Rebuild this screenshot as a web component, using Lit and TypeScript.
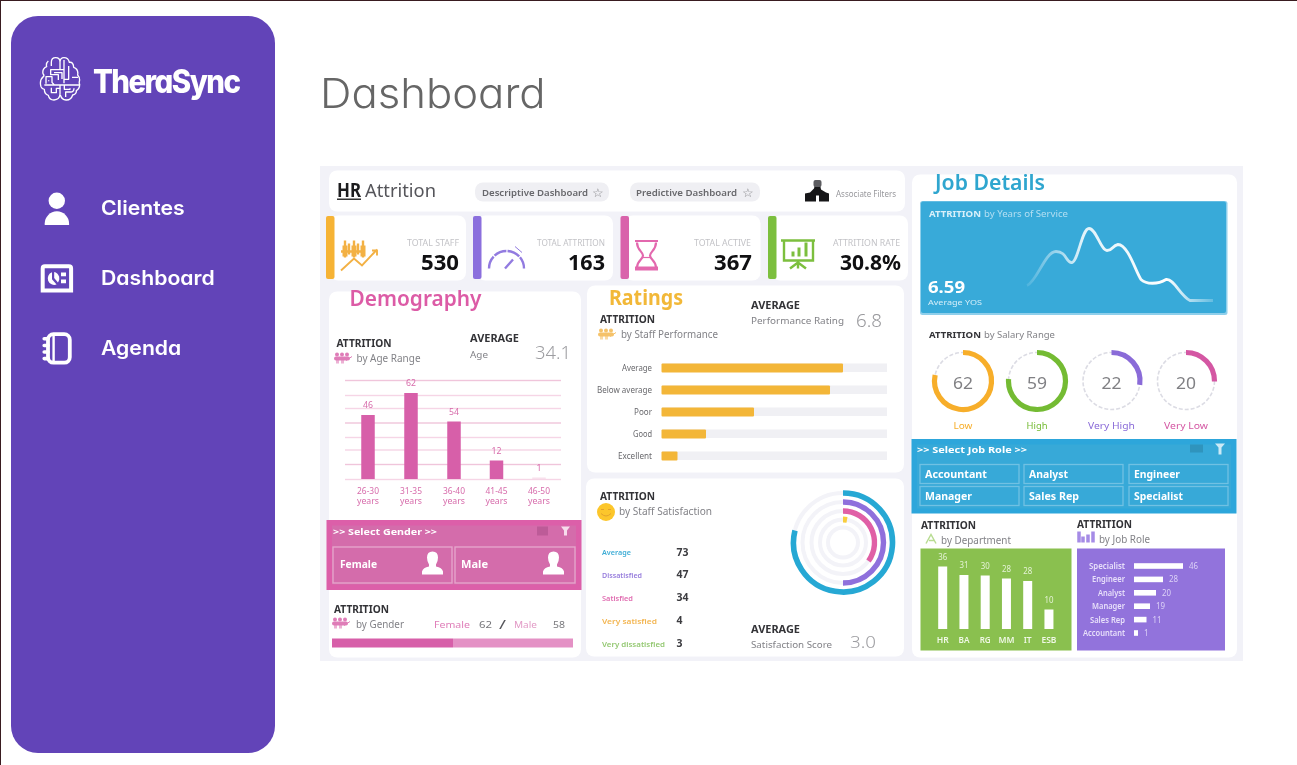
import { LitElement, html, svg, css } from "lit";
import { customElement } from "lit/decorators.js";

const PINK = "#d75fa9";
const GOLD = "#f3b638";
const PURPLE = "#9273dc";
const GREEN = "#7cbf3e";
const DARK = "#333337";
const GREY = "#828287";

interface TextOptions {
  weight?: number;
  anchor?: "start" | "middle" | "end";
}

/** Text fitted to a given width, on the given baseline. */
const label = (
  x: number,
  y: number,
  width: number,
  size: number,
  fill: string,
  text: string,
  { weight = 400, anchor = "start" }: TextOptions = {},
) => svg`<text x=${x} y=${y} font-size=${size} fill=${fill} font-weight=${weight}
  text-anchor=${anchor} textLength=${width} lengthAdjust="spacingAndGlyphs">${text}</text>`;

/** Clockwise arc that starts at twelve o'clock. */
const arc = (cx: number, cy: number, r: number, degrees: number, color: string, width: number) => {
  const a = (degrees * Math.PI) / 180;
  const x = cx + r * Math.sin(a);
  const y = cy - r * Math.cos(a);
  return svg`<path d="M${cx} ${cy - r}A${r} ${r} 0 ${degrees > 180 ? 1 : 0} 1 ${x} ${y}"
    fill="none" stroke=${color} stroke-width=${width}></path>`;
};

const panel = (x: number, y: number, w: number, h: number) =>
  svg`<rect x=${x} y=${y} width=${w} height=${h} rx="8" fill="#fff"></rect>`;

const people = (x: number, y: number, color: string) => svg`
  <g transform="translate(${x} ${y})" fill=${color}>
    <circle cx="3" cy="2" r="2"></circle><circle cx="8" cy="2" r="2"></circle><circle cx="13" cy="2" r="2"></circle>
    <rect x="0" y="4" width="16" height="4" rx="2"></rect>
    <rect x="2" y="7" width="3" height="4" opacity=".6"></rect><rect x="7" y="7" width="3" height="4" opacity=".6"></rect>
    <path d="M12 8l6-4" stroke=${color}></path>
  </g>`;

const heading = (x: number, y: number, subject: string, width: number, gap = 20) => svg`
  ${label(x, y, 55, 10.5, DARK, "ATTRITION", { weight: 700 })}
  ${label(x + gap, y + 15, width, 10, GREY, subject)}`;

const average = (x: number, y: number, subject: string, width: number) => svg`
  ${label(x, y, 49, 10.5, DARK, "AVERAGE", { weight: 700 })}
  ${label(x, y + 15.5, width, 9.5, GREY, subject)}`;

@customElement("hr-report")
export class HrReport extends LitElement {
  static styles = css`
    :host {
      display: block;
      width: 923px;
      height: 495px;
      overflow: hidden;
      background: #f2f2f8;
    }
    .report {
      display: block;
      width: 100%;
      height: 100%;
      font-family: "Noto Sans", "Open Sans", sans-serif;
      filter: blur(0.75px);
    }
  `;

  private header() {
    return svg`
      ${panel(329, 170, 576, 41)}
      ${label(337, 196, 24, 19, "#1c1c1e", "HR", { weight: 700 })}
      <rect x="337" y="198" width="24" height="1.5" fill="#333"></rect>
      ${label(365, 196, 71, 18.5, "#55555a", "Attrition")}
      <rect x="475" y="182" width="134" height="19" rx="8" fill="#efeff3"></rect>
      ${label(482, 195, 106, 9.5, "#68686c", "Descriptive Dashboard", { weight: 600 })}
      ${label(592, 196, 12, 12, "#8a8a8e", "☆")}
      <rect x="630" y="182" width="130" height="19" rx="8" fill="#efeff3"></rect>
      ${label(636, 195, 101, 9.5, "#68686c", "Predictive Dashboard", { weight: 600 })}
      ${label(742, 196, 12, 12, "#8a8a8e", "☆")}
      <path d="M815 184h5l1 5 5 3 3 1v8h-10v-6h-3v6h-11v-8l5-1 4-4z" fill="#161618"></path>
      <rect x="813.500" y="179.500" width="8" height="7" rx="2" fill="#5c5c60"></rect>
      ${label(836, 196, 60, 8.5, "#98989c", "Associate Filters")}`;
  }

  private indicators() {
    const items = [
      { x: 326, color: "#f6b335", title: "TOTAL STAFF", tx: 407, tw: 52, value: "530", vx: 421, vw: 38 },
      { x: 473, color: "#8b6fdd", title: "TOTAL ATTRITION", tx: 537, tw: 68, value: "163", vx: 568, vw: 37 },
      { x: 620.5, color: "#d963ab", title: "TOTAL ACTIVE", tx: 694, tw: 57, value: "367", vx: 714, vw: 38 },
      { x: 768, color: GREEN, title: "ATTRITION RATE", tx: 833, tw: 67, value: "30.8%", vx: 840, vw: 61 },
    ];
    return svg`
      ${items.map(
        (i) => svg`
          ${panel(i.x + 4, 215, 136, 65)}
          <rect x=${i.x} y="215.5" width="8.5" height="63" rx="2" fill=${i.color}></rect>
          ${label(i.tx, 245, i.tw, 8.5, "#c3c3c7", i.title)}
          ${label(i.vx, 269.5, i.vw, 22, "#101012", i.value, { weight: 700 })}`,
      )}
      <g stroke="#f3b144" fill="none" stroke-width="2.4">
        <path d="M341 251h24M345 240v17M354 240v17M363 240v17M349 243v11M358 243v11"></path>
        <path d="M345 245v11M354 245v11M363 245v11" stroke-width="5"></path>
        <path d="M341 270l13-12 8 7 15-16M372 250h5v5" stroke-width="1.9"></path>
      </g>
      <g stroke="#927be0" fill="none" stroke-width="2.4">
        <path d="M489 268a17.5 17.5 0 0 1 35 0M505 268l8-9" stroke-dasharray="13 1.2"></path>
        <path d="M515 246l7 6" stroke-width="1"></path>
      </g>
      <g fill="none" stroke="#e368ae" stroke-width="2.2">
        <path d="M635 240.500h23M637 242c0 8 6 9 6 13s-6 5-6 12M656 242c0 8-6 9-6 13s6 5 6 12"></path>
        <path d="M635 268h23" stroke-width="4"></path><path d="M643 257h7" stroke-width="1.2"></path>
      </g>
      <g fill="none" stroke=${GREEN} stroke-width="2.4">
        <path d="M781 240h34M784 241v19h29v-19M798 260v8M790 268l8-6 8 6"></path>
        <path d="M793 256v-5M799 256v-9M806 256v-14" stroke-width="3"></path>
      </g>`;
  }

  private demography() {
    const bars = [
      { x: 368, top: 414.500, value: "46", years: "26-30" },
      { x: 411, top: 392.500, value: "62", years: "31-35" },
      { x: 454, top: 421, value: "54", years: "36-40" },
      { x: 496.500, top: 460, value: "12", years: "41-45" },
      { x: 539, top: 477, value: "1", years: "46-50" },
    ];
    return svg`
      ${panel(329, 291, 252, 366)}
      ${label(349.5, 305.5, 132, 21.5, "#dc5ba6", "Demography", { weight: 600 })}
      ${heading(336.5, 346.5, "by Age Range", 64, 20)}
      ${people(334, 352, "#df7db8")}
      ${average(470, 341.5, "Age", 18)}
      ${label(535, 358, 36, 17.5, "#9d9da1", "34.1", { weight: 300 })}
      ${[380, 395, 408, 422.5, 437, 449.5, 464, 479].map(
        (y, i) => svg`<rect x="345" y=${y - 0.7} width="216" height="1.4" fill=${i % 3 ? "#f6d5e6" : "#f0c5db"}></rect>`,
      )}
      ${bars.map(
        (b) => svg`
          <rect x=${b.x - 6.75} y=${b.top} width="13.5" height=${478.5 - b.top} fill=${b.top > 470 ? "#f8e0ec" : PINK}></rect>
          ${label(b.x, b.top - 7, b.value.length * 5, 8, "#d76cab", b.value, { anchor: "middle" })}
          ${label(b.x, 493, 22, 8.5, "#d76cab", b.years, { anchor: "middle" })}
          ${label(b.x, 503, 22, 8, "#d76cab", "years", { anchor: "middle" })}`,
      )}`;
  }

  private gender() {
    const person = (x: number) => svg`
      <path d="M${x} 574v-3q1-4 7-5v-2q-2-3-2-7 0-6 5.500-6t5.500 6q0 4-2 7v2q6 1 7 5v3z" fill="#fff"></path>`;
    return svg`
      <rect x="326.500" y="519.500" width="255" height="70" fill="#dc5fa9"></rect>
      <rect x="332" y="525" width="244" height="59" fill="#d46cab"></rect>
      ${label(333, 534.500, 104, 9.5, "#fff", ">> Select Gender >>", { weight: 700 })}
      <rect x="537" y="526" width="11" height="9" fill="#bd5b98"></rect>
      <path d="M561 526h9l-3 4v5h-3v-5z" fill="#f7dcec"></path>
      <g fill="none" stroke="#e6a3cb" stroke-width="1.4">
        <rect x="333" y="546.500" width="119" height="36"></rect>
        <rect x="455" y="546.500" width="120" height="36"></rect>
      </g>
      ${label(340, 567.500, 37, 10, "#fff", "Female", { weight: 700 })}
      ${label(461, 567.500, 27, 10, "#fff", "Male", { weight: 700 })}
      ${person(422)}${person(543)}
      ${heading(334, 612, "by Gender", 48, 22)}
      ${people(332, 617, "#df7db8")}
      ${label(434, 627, 36, 8.5, "#df7db8", "Female")}
      ${label(479, 627.500, 13, 9.5, "#77777b", "62")}
      ${label(499, 628, 7, 13, "#55555a", "/")}
      ${label(514, 627, 23, 8.5, "#e29ac6", "Male")}
      ${label(553, 627.500, 12, 9.5, "#77777b", "58")}
      <rect x="332" y="638" width="121" height="9" fill="#d75fa9"></rect>
      <rect x="453" y="638" width="120" height="9" fill="#e491c5"></rect>`;
  }

  private ratings() {
    const rows = [
      { name: "Average", width: 30, end: 843 },
      { name: "Below average", width: 55, end: 830 },
      { name: "Poor", width: 18, end: 754 },
      { name: "Good", width: 19, end: 706 },
      { name: "Excellent", width: 34, end: 677.500 },
    ];
    return svg`
      ${panel(587, 285, 317, 187)}
      ${label(609, 304, 74, 21, "#f2b838", "Ratings", { weight: 700 })}
      ${heading(600, 322, "by Staff Performance", 97, 21)}
      ${people(598, 328, "#f5c26a")}
      ${average(751, 308, "Performance Rating", 93)}
      ${label(856, 326, 26, 17.5, "#98989c", "6.8", { weight: 300 })}
      ${rows.map((r, i) => {
        const y = 363 + i * 22;
        return svg`
          <rect x="662" y=${y} width="225" height="8.500" fill="#f0f0f4"></rect>
          <rect x="661.500" y=${y} width=${r.end - 661.5} height="9" rx="1" fill=${GOLD}></rect>
          ${label(652, y + 7, r.width, 8.5, "#68686c", r.name, { anchor: "end" })}`;
      })}`;
  }

  private satisfaction() {
    const rows = [
      { name: "Average", width: 29, color: "#3fadd6", value: "73" },
      { name: "Dissatisfied", width: 40, color: "#967cdc", value: "47" },
      { name: "Satisfied", width: 31, color: "#e06cb0", value: "34" },
      { name: "Very satisfied", width: 55, color: "#f3b550", value: "4" },
      { name: "Very dissatisfied", width: 63, color: "#94c872", value: "3" },
    ];
    return svg`
      ${panel(586, 478, 318, 178)}
      ${heading(600, 499, "by Staff Satisfaction", 93, 19)}
      <circle cx="606" cy="511.500" r="9" fill="#fcc62b"></circle>
      <path d="M601 509h3M608 509h3M601 513q5 5 10 0" stroke="#e3a32b" fill="none"></path>
      ${rows.map(
        (r, i) => svg`
          ${label(602, 554.500 + i * 22.9, r.width, 7.5, r.color, r.name, { weight: 600 })}
          ${label(676.500, 555 + i * 22.9, r.value.length * 6, 10, "#3c3c40", r.value, { weight: 700 })}`,
      )}
      ${[49.5, 40.5, 31.5, 23, 15].map(
        (r) => svg`<circle cx="843" cy="542" r=${r} fill="none" stroke="#f3f3f8" stroke-width="4"></circle>`,
      )}
      ${arc(843, 542, 49.500, 284, "#26a8d4", 5.6)}
      ${arc(843, 542, 40.500, 180, "#8f70dc", 5.4)}
      ${arc(843, 542, 31.500, 126, "#e05fa6", 5.4)}
      ${arc(843, 542, 23, 10, "#f8cd3e", 6)}
      ${average(751, 632, "Satisfaction Score", 81)}
      ${label(850, 647, 26, 17, "#9d9da1", "3.0", { weight: 300 })}`;
  }

  private jobDetails() {
    const donuts = [
      { x: 963, angle: 282, color: "#f7ae2a", value: "62", name: "Low", width: 19 },
      { x: 1037, angle: 274, color: "#74bb33", value: "59", name: "High", width: 21 },
      { x: 1111.5, angle: 98, color: "#8a6bd8", value: "22", name: "Very High", width: 47 },
      { x: 1186, angle: 91, color: "#d457a3", value: "20", name: "Very Low", width: 44 },
    ];
    return svg`
      ${panel(912, 174, 325, 483)}
      ${label(935, 189.500, 110, 21, "#2fa6cf", "Job Details", { weight: 600 })}
      <rect x="920" y="200.500" width="307.500" height="114" rx="2.500" fill="#8fcfeb"></rect>
      <rect x="921" y="201" width="305" height="111.500" rx="2" fill="#38aad9"></rect>
      ${label(929, 216, 52, 9.5, "#d8f0fa", "ATTRITION", { weight: 700 })}
      ${label(984, 216, 84, 9.5, "#b4dff2", "by Years of Service")}
      ${label(928, 292.500, 37, 16, "#fff", "6.59", { weight: 700 })}
      ${label(928, 304.500, 54, 7.5, "#d4eef9", "Average YOS")}
      <defs>
        <linearGradient id="fade" gradientUnits="userSpaceOnUse" x1="1026" y1="0" x2="1214" y2="0">
          <stop offset="0" stop-color="#fff" stop-opacity=".1"></stop>
          <stop offset=".3" stop-color="#fff" stop-opacity=".85"></stop>
          <stop offset=".75" stop-color="#fff"></stop>
          <stop offset="1" stop-color="#fff" stop-opacity=".2"></stop>
        </linearGradient>
      </defs>
      <path d="M1027 285C1037 281 1045 251 1056 251S1066 263 1072 262 1082 228 1089 228 1101 250 1107 250 1112 245 1118 244C1128 244 1136 272 1141 279 1146 284 1158 284 1166 279 1174 278 1180 295 1190 300H1213"
        fill="none" stroke="url(#fade)" stroke-width="2.800"></path>
      ${label(929, 337, 52, 9, DARK, "ATTRITION", { weight: 700 })}
      ${label(984, 337, 71, 9, GREY, "by Salary Range")}
      ${donuts.map(
        (d) => svg`
          <circle cx=${d.x} cy="380.500" r="28.500" fill="none" stroke="#dcdce4" stroke-width="1.600" stroke-dasharray="4 2"></circle>
          ${arc(d.x, 380.5, 28.5, d.angle, d.color, 5.2)}
          ${label(d.x, 388, 20, 17, "#808084", d.value, { anchor: "middle" })}
          ${label(d.x, 428, d.width, 9, d.color, d.name, { anchor: "middle" })}`,
      )}`;
  }

  private roles() {
    const names: [string, number, number, number][] = [
      ["Accountant", 925, 477, 62],
      ["Analyst", 1029, 477, 39],
      ["Engineer", 1134, 477, 46],
      ["Manager", 925, 499, 47],
      ["Sales Rep", 1029, 499, 50],
      ["Specialist", 1134, 499, 49],
    ];
    return svg`
      <rect x="911.500" y="438.500" width="325" height="74.500" fill="#2da6db"></rect>
      <rect x="917" y="444" width="314" height="64" fill="#37a9d8"></rect>
      ${label(917, 452.500, 110, 9.5, "#fff", ">> Select Job Role >>", { weight: 700 })}
      <rect x="1190" y="444" width="13" height="8" fill="#2f94bd"></rect>
      <path d="M1215 443h10l-3.500 4v7h-3v-7z" fill="#cceaf6"></path>
      ${names.map(
        ([name, x, y, width]) => svg`
          <rect x=${x - 5} y=${y - 13} width="99" height="19" fill="none" stroke="#70c1e3" stroke-width="1.300"></rect>
          ${label(x, y, width, 10.5, "#fff", name, { weight: 700 })}`,
      )}`;
  }

  private breakdowns() {
    const departments = [
      { name: "HR", top: 566, value: "36", width: 12 },
      { name: "BA", top: 574.5, value: "31", width: 11 },
      { name: "RG", top: 575, value: "30", width: 11 },
      { name: "MM", top: 578, value: "28", width: 16 },
      { name: "IT", top: 580.5, value: "28", width: 8 },
      { name: "ESB", top: 609, value: "10", width: 15 },
    ];
    const roles = [
      { name: "Specialist", width: 36, end: 1183, value: "46" },
      { name: "Engineer", width: 33, end: 1163, value: "28" },
      { name: "Analyst", width: 27, end: 1156, value: "20" },
      { name: "Manager", width: 33, end: 1150, value: "19" },
      { name: "Sales Rep", width: 35, end: 1146.5, value: "11" },
      { name: "Accountant", width: 42, end: 1138, value: "1" },
    ];
    return svg`
      ${heading(921, 528, "by Department", 70, 20)}
      <path d="M926 543l5-9 5 9M929 540h5" stroke="#b8dc92" fill="none" stroke-width="1.500"></path>
      ${heading(1077, 527.500, "by Job Role", 51, 22)}
      <path d="M1079 542v-11M1083 542v-6M1088 542v-8M1093 542v-11" stroke="#a58be6" stroke-width="3.500"></path>
      <rect x="920.500" y="548" width="151" height="102" fill="#8ac04f"></rect>
      ${departments.map((d, i) => {
        const x = 942.7 + i * 21.25;
        return svg`
          <rect x=${x - 4.5} y=${d.top} width="9" height=${628.5 - d.top} fill="#fff"></rect>
          ${label(x, d.top - 7, 9, 8, "#e4f2d5", d.value, { anchor: "middle" })}
          ${label(x, 642, d.width, 8.5, "#f0f8e6", d.name, { anchor: "middle", weight: 600 })}`;
      })}
      <rect x="1077" y="548" width="148" height="102" fill=${PURPLE}></rect>
      ${roles.map((r, i) => {
        const y = 565.5 + i * 13.4;
        return svg`
          ${label(1125, y + 3, r.width, 8.5, "#e8e0fa", r.name, { anchor: "end", weight: 600 })}
          <rect x="1134" y=${y - 2.8} width=${r.end - 1134} height="5.600" fill="#fff"></rect>
          ${label(r.end + 6, y + 3, r.value.length * 4.5, 8, "#ddd2f7", r.value)}`;
      })}`;
  }

  render() {
    return html`
      <svg class="report" viewBox="320 165.500 923 495" preserveAspectRatio="none" role="img" aria-label="HR Attrition">
        <rect x="315" y="160" width="933" height="506" fill="#f2f2f8"></rect>
        ${this.header()} ${this.indicators()} ${this.demography()} ${this.gender()} ${this.ratings()}
        ${this.satisfaction()} ${this.jobDetails()} ${this.roles()} ${this.breakdowns()}
      </svg>
    `;
  }
}

const clientIcon = html`<svg class="icon" viewBox="0 0 36 36" fill="#fff">
  <circle cx="17.800" cy="10.800" r="8.200"></circle>
  <path d="M5.700 35v-1.500a12.200 12.200 0 0 1 24.400 0V35z"></path>
</svg>`;

const dashboardIcon = html`<svg class="icon" viewBox="0 0 36 36">
  <path d="M3.700 30.500V8.500q0-2.200 2.200-2.200h24q2.200 0 2.200 2.200v22z" fill="none" stroke="#fff" stroke-width="4"></path>
  <path d="M13 12.200v7l4.600 5.300A6.300 6.300 0 1 1 13 12.200z" fill="#fff"></path>
  <path d="M15.200 12a6.600 6.600 0 0 1 3.700 10.500L15.200 18z" fill="#fff"></path>
  <path d="M22 12.500h5v3.800h-5zM22 19.500h5v3.800h-5z" fill="#fff"></path>
</svg>`;

const agendaIcon = html`<svg class="icon" viewBox="0 0 36 36" fill="none" stroke="#fff">
  <rect x="9" y="4.200" width="21.800" height="28.500" rx="5.500" stroke-width="3.800"></rect>
  <path d="M14.600 4v29" stroke-width="2.400"></path>
  <path d="M5.200 8.800H9M5.200 15.500H9M5.200 22H9M5.200 28.600H9" stroke-width="3.600" stroke-linecap="round"></path>
</svg>`;

@customElement("app-root")
export class AppRoot extends LitElement {
  static styles = css`
    :host {
      display: block;
      box-sizing: border-box;
      height: 765px;
      overflow: hidden;
      border-top: 1px solid #391b20;
      border-left: 1px solid #391b20;
      background: #fff;
      font-family: Inter, "Open Sans", sans-serif;
      font-feature-settings: "cv11";
    }
    .page {
      display: flex;
      gap: 45px;
      padding: 15px 0 0 10px;
    }
    .sidebar {
      box-sizing: border-box;
      flex: none;
      width: 264px;
      height: 736.5px;
      padding: 39px 0 0 28px;
      border-radius: 27px;
      background: #6244b8;
      color: #fff;
    }
    .brand {
      display: flex;
      align-items: center;
      gap: 12px;
      height: 48px;
    }
    .brain {
      width: 42px;
      height: 45.333px;
    }
    .name {
      padding-top: 5px;
      font-size: 32px;
      font-weight: 800;
      line-height: 48px;
      letter-spacing: -1.7px;
      white-space: nowrap;
      transform: scaleX(0.92);
      transform-origin: left;
    }
    .nav {
      display: flex;
      flex-direction: column;
      gap: 34px;
      margin-top: 87px;
    }
    .item {
      display: flex;
      align-items: center;
      gap: 26px;
      height: 36px;
    }
    .icon {
      width: 36px;
      height: 36px;
    }
    .text {
      font-size: 20px;
      font-weight: 600;
      line-height: 36px;
      transform: scaleX(1.06);
      transform-origin: left;
    }
    .content {
      flex: none;
      width: 923px;
    }
    .title {
      margin: 45px 0 40.500px;
      color: #666;
      font-size: 41px;
      font-weight: 300;
      line-height: 64px;
      transform: scaleX(1.065);
      transform-origin: left;
    }
  `;

  render() {
    const items = [
      { text: "Clientes", icon: clientIcon },
      { text: "Dashboard", icon: dashboardIcon },
      { text: "Agenda", icon: agendaIcon },
    ];
    return html`
      <div class="page">
        <aside class="sidebar">
          <div class="brand">
            <svg class="brain" viewBox="117 167 126 136" fill="none" stroke="#fff" stroke-width="4" stroke-linejoin="round">
              <path d="M145 182q-8 7-5 17-14 6-11 21 4 4 2 8-14 12-8 31 3 7 10 8 0 15 12 18 3 14 17 14 17-1 18-17V254"></path>
              <path d="M154 197v-11q0-14 13-14t13 13v24M180 184q1-12 12-12 13 0 16 14 12-2 13 15 15 5 12 23 8 9 5 20-1 6 1 8 0 14-10 19 1 10-11 13-5 16-20 15-13-1-17-15"></path>
              <path d="M192 249v-70M206 197v40h-12M192 208h-40v15h23v16M162 217h24v19M138 250v-21h18v17l7 8M146 243v-3M133 254h107M216 231h18M154 262v15h15v-13h12M193 255v12h17v-3M222 264q0 12-12 11h-13v15"></path>
            </svg>
            <span class="name">TheraSync</span>
          </div>
          <nav class="nav">
            ${items.map((i) => html`<div class="item">${i.icon}<span class="text">${i.text}</span></div>`)}
          </nav>
        </aside>
        <main class="content">
          <h1 class="title">Dashboard</h1>
          <hr-report></hr-report>
        </main>
      </div>
    `;
  }
}
